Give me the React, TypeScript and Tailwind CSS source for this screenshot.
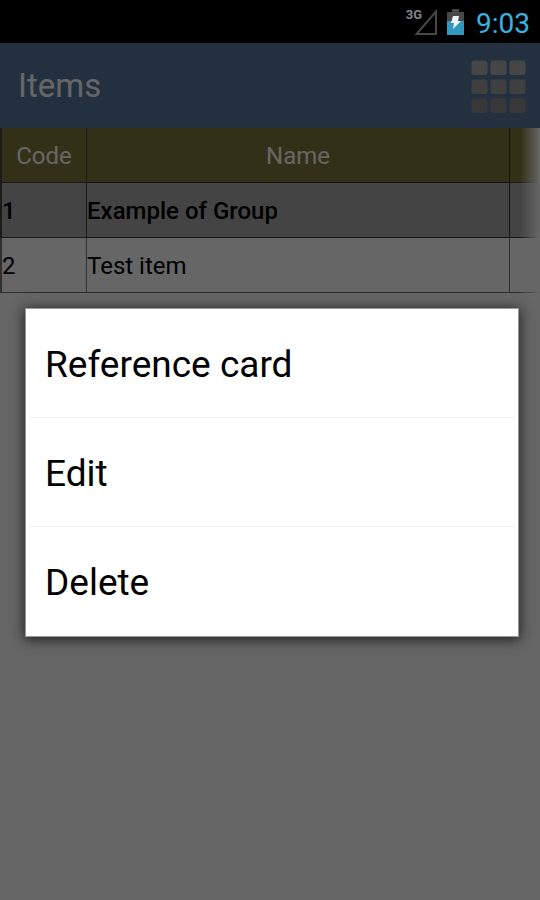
import clsx from "clsx";

interface Item {
  code: string;
  name: string;
  isGroup?: boolean;
}

const ITEMS: Item[] = [
  { code: "1", name: "Example of Group", isGroup: true },
  { code: "2", name: "Test item" },
];

const ACTIONS = ["Reference card", "Edit", "Delete"];

function StatusBar() {
  return (
    <div className="flex h-[43px] items-center justify-end bg-black pr-[10px] pt-[2px]">
      <span className="mb-4 text-[13px] font-bold leading-none text-[#858585]">3G</span>
      <svg className="-ml-2 h-7 w-6" viewBox="0 0 24 28" fill="none">
        <path d="M22 2.5V25H2.5Z" stroke="#484848" strokeWidth="2" />
      </svg>
      <svg className="ml-2 h-7 w-5" viewBox="0 0 20 28">
        <path d="M6 0h7v3h5v9H1V3h5Z" fill="#484848" />
        <path d="M1 12h17v14H1Z" fill="#3398bd" />
        <path d="M7 7h6l-1 5h3l-8 8 1-6H5Z" fill="#f0f6f8" />
      </svg>
      <time className="ml-[10px] pt-[2px] text-[28px] leading-none text-[#33b5e5]">9:03</time>
    </div>
  );
}

function TitleBar() {
  return (
    <header className="flex h-[85px] items-center justify-between bg-[#5578a0] pl-[18px] pr-[14px]">
      <h1 className="text-[33px] leading-none text-white">Items</h1>
      <button type="button" aria-label="Menu" className="pt-[2px]">
        <svg className="h-[54px] w-[55px]" viewBox="0 0 55 54">
          {[0, 1, 2].map((row) =>
            [0, 1, 2].map((col) => (
              <rect
                key={`${row}-${col}`}
                x={col * 19 + 0.5}
                y={row * 19 + 0.5}
                width="16"
                height="14.5"
                rx="2.5"
                fill={["#aeaeae", "#9e9e9e", "#8c8c8c"][row]}
              />
            ))
          )}
        </svg>
      </button>
    </header>
  );
}

function ItemsTable() {
  return (
    <div className="relative overflow-hidden">
      <table className="w-full table-fixed border-separate border-spacing-0 text-2xl leading-none text-black">
        <colgroup>
          <col className="w-[87px]" />
          <col />
          <col className="w-[30px]" />
        </colgroup>
        <thead>
          <tr className="h-[55px] bg-[#7d7837] text-white">
            <th className="border-b border-l-2 border-r border-[#444] p-0 pt-[2px] font-normal">Code</th>
            <th className="border-b border-r border-[#333] p-0 pt-[2px] font-normal">Name</th>
            <th className="border-b border-[#444] p-0" />
          </tr>
        </thead>
        <tbody>
          {ITEMS.map((item) => (
            <tr key={item.code} className={clsx("h-[55px]", item.isGroup ? "bg-[#aaa] font-medium" : "bg-white")}>
              <td className={clsx("border-b border-l-2 border-r p-0 pt-[2px]", item.isGroup ? "border-[#444]" : "border-[#777]")}>
                {item.code}
              </td>
              <td className={clsx("border-b border-r p-0 pt-[2px]", item.isGroup ? "border-[#333]" : "border-[#777]")}>
                {item.name}
              </td>
              <td className={clsx("border-b p-0", item.isGroup ? "border-[#333]" : "border-[#777]")} />
            </tr>
          ))}
        </tbody>
      </table>
      <div className="absolute inset-y-0 right-0 w-5 bg-gradient-to-r from-white/0 to-white" />
    </div>
  );
}

function ContextMenu() {
  return (
    <div className="absolute inset-0 flex items-center bg-black/60 pl-[26px] pr-[22px] pt-[2px]">
      <div
        role="dialog"
        aria-label="Item actions"
        className="w-full divide-y divide-[#f0f0f0] bg-white px-[3px] shadow-[0_0_0_1px_#999,0_2px_12px_2px_#222]"
      >
        {ACTIONS.map((action) => (
          <button
            key={action}
            type="button"
            className="block h-[109px] w-full px-4 pt-[2px] text-left text-[37px] leading-none text-black"
          >
            {action}
          </button>
        ))}
      </div>
    </div>
  );
}

export default function App() {
  return (
    <div className="flex min-h-screen flex-col bg-white font-[Roboto,sans-serif]">
      <StatusBar />
      <main className="relative flex-1">
        <TitleBar />
        <ItemsTable />
        <ContextMenu />
      </main>
    </div>
  );
}
